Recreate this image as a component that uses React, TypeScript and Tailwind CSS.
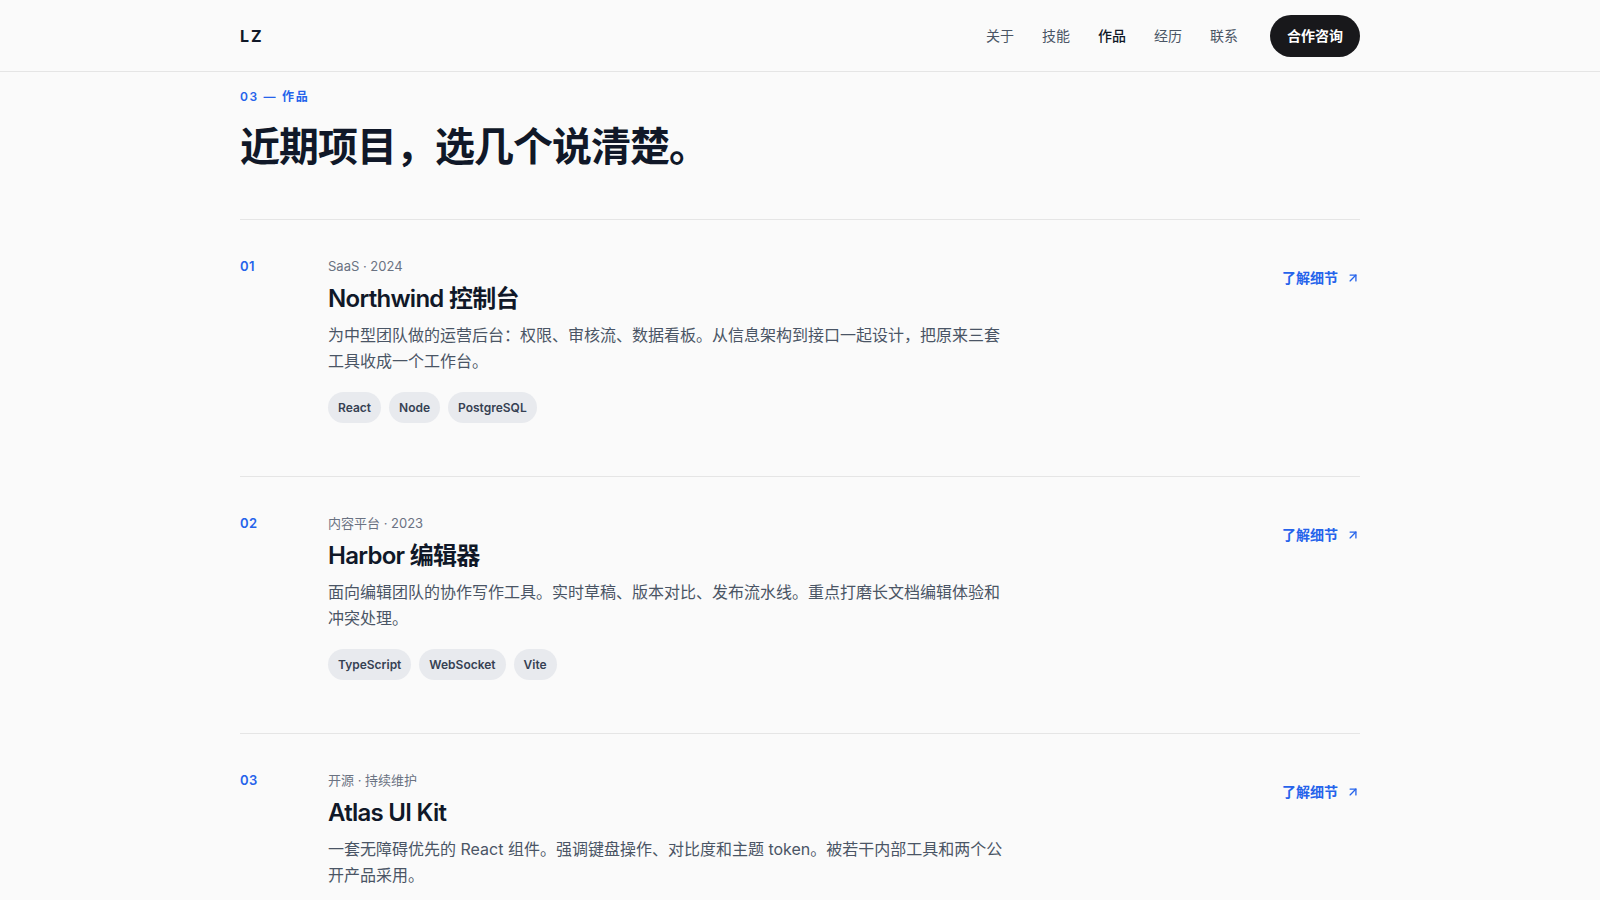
import { ArrowUpRight } from "lucide-react";

const projects = [
  {
    no: "01",
    meta: "SaaS · 2024",
    title: "Northwind 控制台",
    desc: "为中型团队做的运营后台：权限、审核流、数据看板。从信息架构到接口一起设计，把原来三套工具收成一个工作台。",
    tags: ["React", "Node", "PostgreSQL"],
  },
  {
    no: "02",
    meta: "内容平台 · 2023",
    title: "Harbor 编辑器",
    desc: "面向编辑团队的协作写作工具。实时草稿、版本对比、发布流水线。重点打磨长文档编辑体验和冲突处理。",
    tags: ["TypeScript", "WebSocket", "Vite"],
  },
  {
    no: "03",
    meta: "开源 · 持续维护",
    title: "Atlas UI Kit",
    desc: "一套无障碍优先的 React 组件。强调键盘操作、对比度和主题 token。被若干内部工具和两个公开产品采用。",
    tags: ["React", "a11y", "Storybook"],
  },
];

const links = ["关于", "技能", "作品", "经历", "联系"];

export default function App() {
  return (
    <div className="min-h-screen bg-[#fafafa] text-gray-900 font-['Inter','Noto_Sans_CJK_SC',sans-serif]">
      {/* Header */}
      <header className="border-b border-[#e5e5e5]">
        <div className="mx-auto flex h-[71px] max-w-[1120px] items-center justify-between">
          <span className="text-base font-bold tracking-[0.12em]">LZ</span>
          <nav className="flex items-center">
            <div className="flex items-center gap-7 text-sm">
              {links.map((l) => (
                <a
                  key={l}
                  href="#"
                  className={l === "作品" ? "text-gray-900 font-medium" : "text-gray-600"}
                >
                  {l}
                </a>
              ))}
            </div>
            <button className="ml-8 h-[42px] rounded-full bg-[#18181b] px-[17px] text-sm font-bold text-white">
              合作咨询
            </button>
          </nav>
        </div>
      </header>

      <main className="mx-auto max-w-[1120px]">
        {/* Section heading */}
        <div className="pt-[17px] pb-12">
          <p className="text-xs leading-4 font-semibold tracking-[0.14em] text-[#2563eb]">03 — 作品</p>
          <h1 className="mt-[18px] text-[40px] leading-[48px] font-bold tracking-tight">
            近期项目，选几个说清楚。
          </h1>
        </div>

        {/* Projects */}
        <div>
          {projects.map((p) => (
            <article
              key={p.no}
              className="grid grid-cols-[88px_1fr_auto] border-t border-[#e5e5e5] pt-9 pb-[53px]"
            >
              <span className="text-[13px] leading-5 font-semibold tracking-wide text-[#2563eb]">{p.no}</span>
              <div>
                <p className="text-[13px] leading-5 text-gray-500">{p.meta}</p>
                <h2 className="mt-2 text-2xl leading-[30px] font-semibold tracking-[-0.03em]">
                  {p.title}
                </h2>
                <p className="mt-2 max-w-[680px] text-base leading-[26px] text-gray-600">{p.desc}</p>
                <div className="mt-[18px] flex gap-2">
                  {p.tags.map((t) => (
                    <span
                      key={t}
                      className="flex h-[31px] items-center rounded-full bg-[#e8eaee] px-2.5 text-xs font-semibold text-gray-700"
                    >
                      {t}
                    </span>
                  ))}
                </div>
              </div>
              <a
                href="#"
                className="mt-3 flex h-5 items-center gap-2 text-sm font-semibold text-[#2563eb]"
              >
                了解细节
                <ArrowUpRight className="h-3.5 w-3.5" strokeWidth={2.25} />
              </a>
            </article>
          ))}
        </div>
      </main>
    </div>
  );
}
